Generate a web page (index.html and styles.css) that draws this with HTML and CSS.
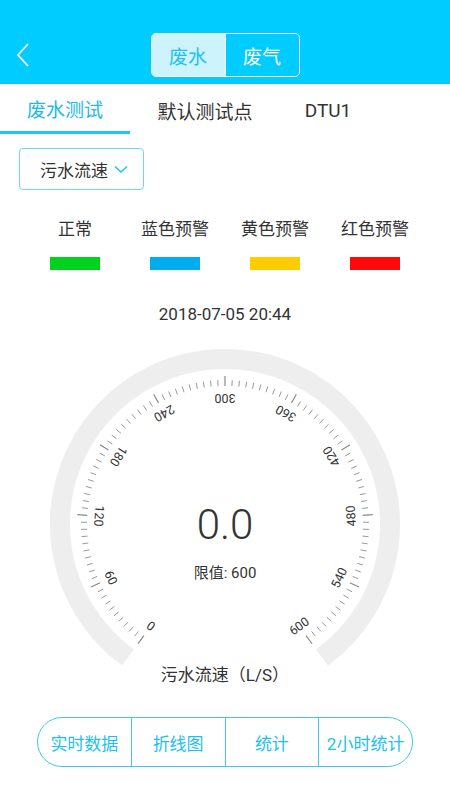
FILE: index.html
```html
<!DOCTYPE html>
<html>
<head lang="zh">
    <meta charset="UTF-8">
    <title>废水</title>
    <link rel="stylesheet" href="styles.css">
</head>
<body>
<div class="header">
    <svg class="back" width="14" height="26" viewBox="0 0 14 26">
        <polyline points="12,2 2,13 12,24" fill="none" stroke="#fff" stroke-width="1.8"/>
    </svg>
    <div class="switch">
        <span class="seg on">废水</span>
        <span class="seg">废气</span>
    </div>
</div>
<div class="tabs">
    <span class="tab t1 active">废水测试</span>
    <span class="tab t2">默认测试点</span>
    <span class="tab t3">DTU1</span>
</div>
<div class="select">
    <span>污水流速</span>
    <svg width="14" height="9" viewBox="0 0 14 9">
        <polyline points="1,1.5 7,7 13,1.5" fill="none" stroke="#1ec2f0" stroke-width="1.6"/>
    </svg>
</div>
<div class="legend">
    <div class="item"><span>正常</span><i class="bar green"></i></div>
    <div class="item"><span>蓝色预警</span><i class="bar blue"></i></div>
    <div class="item"><span>黄色预警</span><i class="bar yellow"></i></div>
    <div class="item"><span>红色预警</span><i class="bar red"></i></div>
</div>
<div class="date">2018-07-05 20:44</div>
<div class="gauge">
    <svg id="dial" width="350" height="318" viewBox="0 0 350 318">
        <path d="M78.02 308.49 A165 165 0 1 1 271.98 308.49" fill="none" stroke="#eeeeee" stroke-width="20"/>
        <g id="ticks"></g>
        <text class="value" x="175" y="190">0.0</text>
        <text class="limit" x="175" y="229">限值: 600</text>
    </svg>
</div>
<div class="unit">污水流速（L/S）</div>
<div class="btns">
    <span class="btn">实时数据</span>
    <span class="btn">折线图</span>
    <span class="btn">统计</span>
    <span class="btn">2小时统计</span>
</div>
<script>
    var g=document.getElementById("ticks");
    var ns="http://www.w3.org/2000/svg";
    var cx=175,cy=175;
    for(var i=0;i<=100;i++){
        var deg=-144+2.88*i;
        var a=deg*Math.PI/180;
        var s=Math.sin(a),c=Math.cos(a);
        var major=(i%10==0);
        var r2=major?148:144;
        var line=document.createElementNS(ns,"line");
        line.setAttribute("x1",cx+138*s);
        line.setAttribute("y1",cy-138*c);
        line.setAttribute("x2",cx+r2*s);
        line.setAttribute("y2",cy-r2*c);
        line.setAttribute("class",major?"major":"minor");
        g.appendChild(line);
        if(major){
            var x=cx+126*s,y=cy-126*c;
            var t=document.createElementNS(ns,"text");
            t.setAttribute("x",x);
            t.setAttribute("y",y);
            t.setAttribute("class","num");
            t.setAttribute("transform","rotate("+(deg+180)+" "+x+" "+y+")");
            t.textContent=i*6;
            g.appendChild(t);
        }
    }
</script>
</body>
</html>
```

FILE: styles.css
```css
*
{
    margin: 0;
    padding: 0;
    box-sizing: border-box;
}
body
{
    width: 450px;
    background: #fff;
    font-family: Roboto, "Noto Sans CJK SC", sans-serif;
    color: #333;
}
.header
{
    height: 84px;
    background: #00ccff;
    position: relative;
    display: flex;
    justify-content: center;
    padding-top: 33px;
}
.back
{
    position: absolute;
    left: 16px;
    top: 42px;
}
.switch
{
    display: flex;
    width: 149px;
    height: 44px;
    border: 1.5px solid #fff;
    border-radius: 5px;
    overflow: hidden;
}
.seg
{
    flex: 1;
    display: flex;
    align-items: center;
    justify-content: center;
    font-size: 19px;
    color: #fff;
}
.seg.on
{
    background: #cdf4fd;
    color: #22c0f0;
    border-right: 1.5px solid #fff;
}
.tabs
{
    display: flex;
    height: 50px;
}
.tab
{
    display: flex;
    align-items: center;
    justify-content: center;
    font-size: 19px;
    color: #333;
    padding-top: 2px;
}
.t1
{
    width: 130px;
}
.t2
{
    width: 150px;
}
.t3
{
    width: 96px;
}
.tab.active
{
    color: #22b8ea;
    border-bottom: 3px solid #1ec6f6;
}
.select
{
    margin: 14px 0 0 19px;
    width: 125px;
    height: 42px;
    border: 1.5px solid #6cd8f4;
    border-radius: 4px;
    display: flex;
    align-items: center;
    padding-left: 20px;
    gap: 6px;
    font-size: 17px;
}
.legend
{
    display: flex;
    padding: 0 25px;
    margin-top: 28px;
}
.item
{
    width: 100px;
    display: flex;
    flex-direction: column;
    align-items: center;
    font-size: 17px;
    line-height: 22px;
}
.bar
{
    display: block;
    width: 50px;
    height: 13px;
    margin-top: 17px;
}
.green
{
    background: #00d21e;
}
.blue
{
    background: #00aeef;
}
.yellow
{
    background: #ffcc00;
}
.red
{
    background: #ff0a0a;
}
.date
{
    margin-top: 34px;
    text-align: center;
    font-size: 17px;
    line-height: 20px;
}
.gauge
{
    margin-top: 25px;
    display: flex;
    justify-content: center;
}
.gauge svg
{
    display: block;
}
.major
{
    stroke: #888;
    stroke-width: 1.2;
}
.minor
{
    stroke: #999;
    stroke-width: 1;
}
.num
{
    font-size: 12.5px;
    fill: #333;
    text-anchor: middle;
    dominant-baseline: central;
}
.value
{
    font-size: 42px;
    font-weight: 300;
    fill: #333;
    text-anchor: middle;
}
.limit
{
    font-size: 15px;
    fill: #333;
    text-anchor: middle;
}
.unit
{
    margin-top: -3px;
    text-align: center;
    font-size: 17px;
    line-height: 22px;
}
.btns
{
    display: flex;
    margin: 31px 37px 0;
    height: 50px;
    border: 1.5px solid #3cc8f0;
    border-radius: 25px;
    overflow: hidden;
}
.btn
{
    flex: 1;
    display: flex;
    align-items: center;
    justify-content: center;
    font-size: 17px;
    color: #1ec0ef;
    border-left: 1.5px solid #3cc8f0;
}
.btn:first-child
{
    border-left: none;
}
```
